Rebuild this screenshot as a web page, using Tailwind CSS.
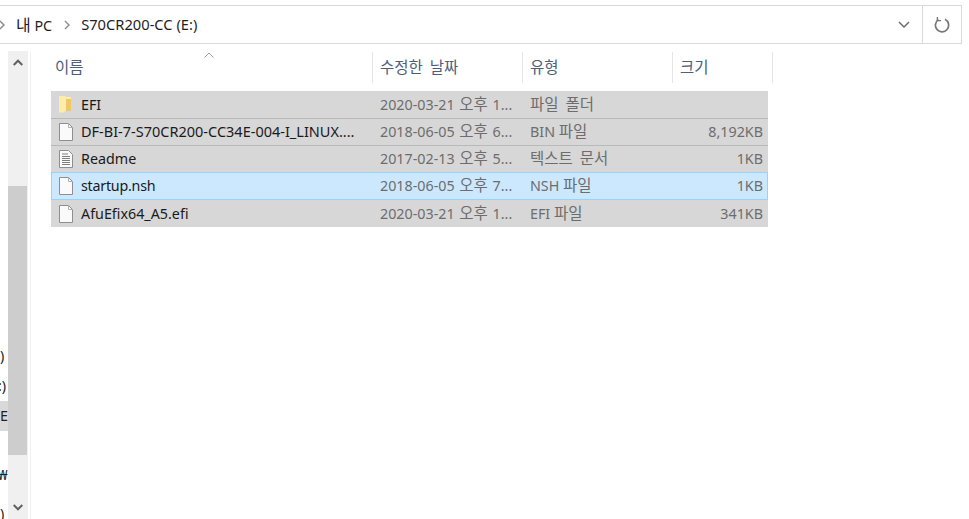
<!DOCTYPE html>
<html lang="ko">
<head>
    <meta charset="UTF-8">
    <title>S70CR200-CC (E:)</title>
    <script src="https://cdn.jsdelivr.net/npm/@tailwindcss/browser@4"></script>
</head>
<body class="w-[969px] h-[519px] overflow-hidden bg-white text-[14.3px] font-['Noto_Sans','Noto_Sans_CJK_KR',sans-serif]">

    <!-- Barra de direcciones -->
    <div class="pt-[5px] pr-[7px]">
        <div class="h-[39px] flex items-center border-y border-r border-[#d9d9d9] text-[#1f1f1f]">
            <svg class="w-[6px] h-[10px] ml-[-1px]" viewBox="0 0 6 10" fill="none" stroke="#8a8a8a" stroke-width="1.4"><path d="M1 1l4 4-4 4"/></svg>
            <span class="ml-[11px]"><span class="text-[16px]">내</span>&nbsp;PC</span>
            <svg class="w-[6px] h-[10px] ml-[12px]" viewBox="0 0 6 10" fill="none" stroke="#8a8a8a" stroke-width="1.4"><path d="M1 1l4 4-4 4"/></svg>
            <span class="ml-[11px] text-[14.7px]">S70CR200-CC (E:)</span>
            <svg class="w-[12px] h-[7px] ml-auto mr-[12px]" viewBox="0 0 12 7" fill="none" stroke="#6e6e6e" stroke-width="1.5"><path d="M1 1l5 5 5-5"/></svg>
            <div class="w-[39px] h-full border-l border-[#d9d9d9] flex items-center justify-center">
                <svg class="w-[16px] h-[17px]" viewBox="0 0 16 17" fill="none" stroke="#777777" stroke-width="1.7"><path d="M4.5 3.6A6.6 6.6 0 1 0 11 3.3"/><path d="M3.4 1v3.6H7" stroke-width="1.4"/></svg>
            </div>
        </div>
    </div>

    <div class="flex h-[475px] pt-[7px]">
        <!-- Panel de navegacion recortado -->
        <div class="w-[8px] overflow-hidden text-[#1f1f1f] pt-[290px] flex flex-col">
            <div class="h-[30px] shrink-0 leading-[30px]">)</div>
            <div class="h-[30px] shrink-0 leading-[30px] ml-[-2px]">:)</div>
            <div class="h-[30px] shrink-0 leading-[30px] bg-[#d9d9d9] text-right">E</div>
            <div class="h-[29px] shrink-0"></div>
            <div class="h-[30px] shrink-0 leading-[30px] ml-[-2px] whitespace-nowrap">₩</div>
            <div class="h-[30px] shrink-0 leading-[30px] mt-[9px]">)</div>
        </div>

        <!-- Barra de desplazamiento -->
        <div class="w-[20px] bg-[#f0f0f0] flex flex-col">
            <div class="h-[135px] flex justify-center pt-[8px]">
                <svg class="w-[10px] h-[7px]" viewBox="0 0 10 7" fill="none" stroke="#606060" stroke-width="2"><path d="M.7 6l4.3-4.3L9.3 6"/></svg>
            </div>
            <div class="h-[269px] w-[19px] bg-[#cdcdcd]"></div>
            <div class="flex-1 flex justify-center pt-[49px]">
                <svg class="w-[10px] h-[7px]" viewBox="0 0 10 7" fill="none" stroke="#606060" stroke-width="2"><path d="M.7 1l4.3 4.3L9.3 1"/></svg>
            </div>
        </div>

        <div class="w-[2px]"></div>
        <div class="w-px bg-[#f0f0f0]"></div>

        <!-- Lista de archivos -->
        <div class="relative pl-[20px] flex-1">
            <svg class="absolute left-[173px] top-[1px] w-[10px] h-[6px]" viewBox="0 0 10 6" fill="none" stroke="#9a9a9a"><path d="M.5 5.5L5 1l4.5 4.5"/></svg>

            <div class="flex h-[32px] pt-[1px] text-[15.5px] [word-spacing:3px] text-[#4c607a]">
                <div class="w-[322px] pl-[4px] flex items-center border-r border-[#e5e5e5]">이름</div>
                <div class="w-[150px] pl-[7px] flex items-center border-r border-[#e5e5e5]">수정한 날짜</div>
                <div class="w-[150px] pl-[7px] flex items-center border-r border-[#e5e5e5]">유형</div>
                <div class="w-[100px] pl-[7px] flex items-center border-r border-[#e5e5e5]">크기</div>
            </div>

            <div class="w-[717px] mt-[8px]">
                <div class="flex items-center h-[28px] bg-[#d7d7d7] border-b border-[#b9b9b9]">
                    <svg class="w-[14px] h-[18px] ml-[8px]" viewBox="0 0 14 18"><path d="M0 0h6l1 1h5v14H6l-1 1.5H0z" fill="#fcedaa"/><path d="M7 3h5v12H7z" fill="#eec766"/></svg>
                    <div class="w-[307px] pl-[8px] text-[#1a1a1a]">EFI</div>
                    <div class="w-[150px] text-[#6d6d6d] [word-spacing:1px]">2020-03-21 <span class="text-[15.5px]">오후</span> 1...</div>
                    <div class="w-[100px] text-[#6d6d6d] text-[15.5px] [word-spacing:3px]">파일 폴더</div>
                    <div class="w-[133px] text-right text-[#6d6d6d]"></div>
                </div>
                <div class="flex items-center h-[27px] bg-[#d7d7d7] border-b border-[#b9b9b9]">
                    <svg class="w-[14px] h-[18px] ml-[8px]" viewBox="0 0 14 18"><path d="M.5.5h9l4 4v13H.5z" fill="#fafafa" stroke="#8e8e8e"/><path d="M9.5.5v4h4" fill="none" stroke="#b0b0b0"/></svg>
                    <div class="w-[307px] pl-[8px] text-[#1a1a1a] text-[14.5px]">DF-BI-7-S70CR200-CC34E-004-I_LINUX....</div>
                    <div class="w-[150px] text-[#6d6d6d] [word-spacing:1px]">2018-06-05 <span class="text-[15.5px]">오후</span> 6...</div>
                    <div class="w-[100px] text-[#6d6d6d]">BIN <span class="text-[15.5px]">파일</span></div>
                    <div class="w-[133px] text-right text-[#6d6d6d]">8,192KB</div>
                </div>
                <div class="flex items-center h-[26px] bg-[#d7d7d7]">
                    <svg class="w-[14px] h-[18px] ml-[8px]" viewBox="0 0 14 18"><path d="M.5.5h9l4 4v13H.5z" fill="#fafafa" stroke="#8e8e8e"/><path d="M3 4h6M3 6.5h8M3 8.5h8M3 10.5h8M3 12.5h8M3 14.5h8" stroke="#7e7e7e"/></svg>
                    <div class="w-[307px] pl-[8px] text-[#1a1a1a]">Readme</div>
                    <div class="w-[150px] text-[#6d6d6d] [word-spacing:1px]">2017-02-13 <span class="text-[15.5px]">오후</span> 5...</div>
                    <div class="w-[100px] text-[#6d6d6d] text-[15.5px] [word-spacing:3px]">텍스트 문서</div>
                    <div class="w-[133px] text-right text-[#6d6d6d]">1KB</div>
                </div>
                <div class="flex items-center h-[28px] bg-[#cce8ff] border border-[#99d1ff]">
                    <svg class="w-[14px] h-[18px] ml-[7px]" viewBox="0 0 14 18"><path d="M.5.5h9l4 4v13H.5z" fill="#fafafa" stroke="#8e8e8e"/><path d="M9.5.5v4h4" fill="none" stroke="#b0b0b0"/></svg>
                    <div class="w-[307px] pl-[8px] text-[#1a1a1a] tracking-[-0.25px]">startup.nsh</div>
                    <div class="w-[150px] text-[#6d6d6d] [word-spacing:1px]">2018-06-05 <span class="text-[15.5px]">오후</span> 7...</div>
                    <div class="w-[100px] text-[#6d6d6d]">NSH <span class="text-[15.5px]">파일</span></div>
                    <div class="w-[133px] text-right text-[#6d6d6d]">1KB</div>
                </div>
                <div class="flex items-center h-[27px] bg-[#d7d7d7]">
                    <svg class="w-[14px] h-[18px] ml-[8px]" viewBox="0 0 14 18"><path d="M.5.5h9l4 4v13H.5z" fill="#fafafa" stroke="#8e8e8e"/><path d="M9.5.5v4h4" fill="none" stroke="#b0b0b0"/></svg>
                    <div class="w-[307px] pl-[8px] text-[#1a1a1a]">AfuEfix64_A5.efi</div>
                    <div class="w-[150px] text-[#6d6d6d] [word-spacing:1px]">2020-03-21 <span class="text-[15.5px]">오후</span> 1...</div>
                    <div class="w-[100px] text-[#6d6d6d]">EFI <span class="text-[15.5px]">파일</span></div>
                    <div class="w-[133px] text-right text-[#6d6d6d]">341KB</div>
                </div>
            </div>
        </div>
    </div>

</body>
</html>
